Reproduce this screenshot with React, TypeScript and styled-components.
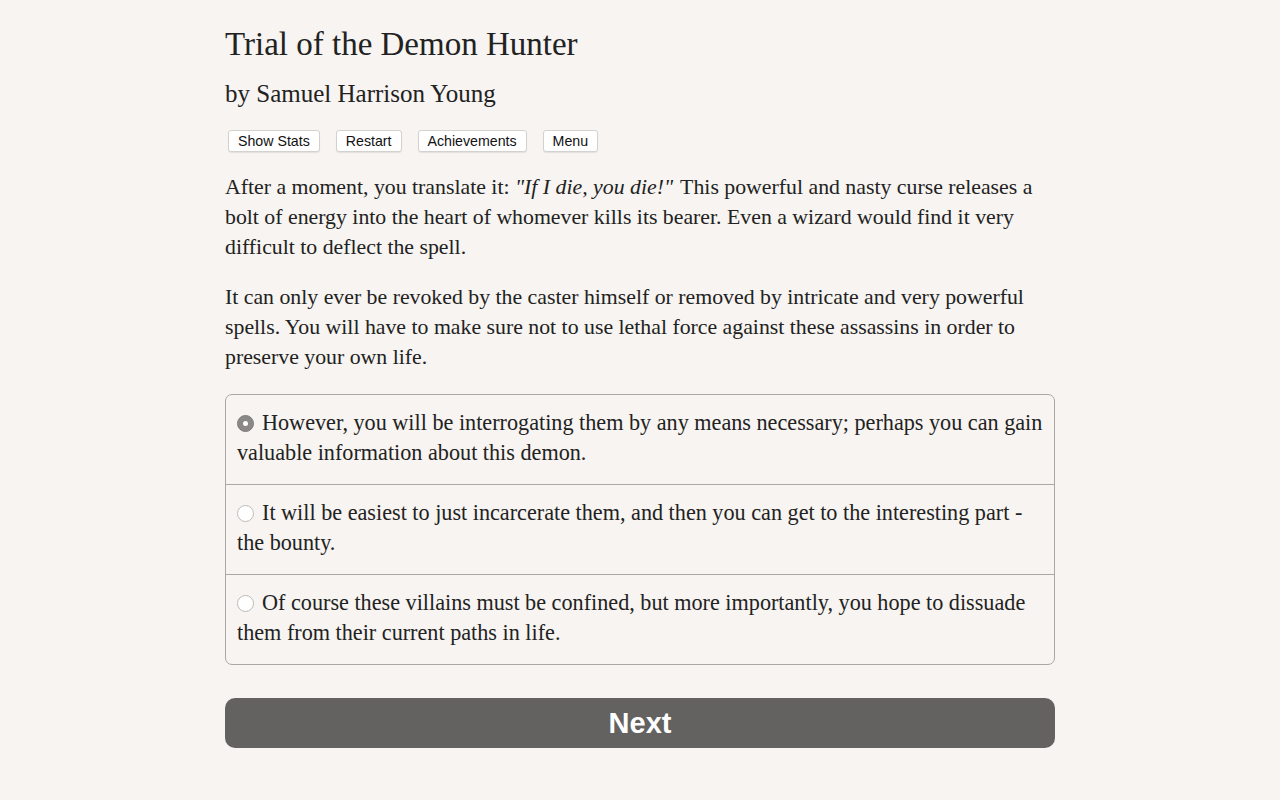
import React, { useState } from 'react';
import styled, { createGlobalStyle } from 'styled-components';

const GlobalStyle = createGlobalStyle`
    html, body {
        margin: 0;
        padding: 0;
        background: #f7f4f1;
    }
    body {
        font-family: "Liberation Serif", "Times New Roman", serif;
        color: #222;
    }
`

type OptionType = {
    id: number
    text: string
}

const options: OptionType[] = [
    { id: 0, text: 'However, you will be interrogating them by any means necessary; perhaps you can gain valuable information about this demon.' },
    { id: 1, text: 'It will be easiest to just incarcerate them, and then you can get to the interesting part - the bounty.' },
    { id: 2, text: 'Of course these villains must be confined, but more importantly, you hope to dissuade them from their current paths in life.' },
]

export default function App() {
    const [selected, setSelected] = useState(0);

    return (
        <>
            <GlobalStyle />
            <Page>
                <Title>Trial of the Demon Hunter</Title>
                <Author>by Samuel Harrison Young</Author>
                <Toolbar>
                    <ToolButton>Show Stats</ToolButton>
                    <ToolButton>Restart</ToolButton>
                    <ToolButton>Achievements</ToolButton>
                    <ToolButton>Menu</ToolButton>
                </Toolbar>
                <Paragraph>
                    After a moment, you translate it: <Quote>"If I die, you die!"</Quote> This powerful and nasty curse releases a bolt of energy into the heart of whomever kills its bearer. Even a wizard would find it very difficult to deflect the spell.
                </Paragraph>
                <Paragraph>
                    It can only ever be revoked by the caster himself or removed by intricate and very powerful spells. You will have to make sure not to use lethal force against these assassins in order to preserve your own life.
                </Paragraph>
                <Choices>
                    {options.map(o => (
                        <Choice key={o.id} onClick={() => setSelected(o.id)}>
                            <Radio checked={selected === o.id} />
                            {o.text}
                        </Choice>
                    ))}
                </Choices>
                <NextButton>Next</NextButton>
            </Page>
        </>
    );
}

const Page = styled.div`
    width: 830px;
    margin: 0 auto;
    padding: 24px 0 40px;
    box-sizing: border-box;
    font-size: 21.8px;
    line-height: 30px;
`

const Title = styled.h1`
    margin: 0;
    font-size: 33px;
    font-weight: normal;
    line-height: 40px;
`

const Author = styled.h2`
    margin: 15px 0 0;
    font-size: 25px;
    font-weight: normal;
    line-height: 30px;
`

const Toolbar = styled.div`
    display: flex;
    gap: 16px;
    margin: 21px 0 0 3px;
`

const ToolButton = styled.button`
    font-family: "Liberation Sans", Arial, sans-serif;
    font-size: 14.2px;
    line-height: 16px;
    color: #111;
    background: #fff;
    border: 1px solid #d4d2cf;
    border-radius: 3px;
    padding: 2px 9px;
    box-shadow: 0 1px 1px rgba(0, 0, 0, 0.08);
`

const Paragraph = styled.p`
    margin: 20px 0 0;
`

const Quote = styled.em`
    padding-right: 2px;
`

const Choices = styled.div`
    margin-top: 22px;
    border: 1px solid #aaa8a5;
    border-radius: 7px;
    overflow: hidden;
`

const Choice = styled.div`
    height: 89px;
    box-sizing: border-box;
    padding: 13px 11px 0;
    font-size: 22.2px;
    cursor: pointer;
    & + & {
        border-top: 1px solid #aaa8a5;
        height: 90px;
    }
`

const Radio = styled.span<{ checked: boolean }>`
    display: inline-block;
    width: 17px;
    height: 17px;
    margin: 0 8px 0 0;
    border-radius: 50%;
    box-sizing: border-box;
    vertical-align: -2px;
    background: ${props => props.checked ? '#8a8987' : '#fff'};
    border: 1px solid ${props => props.checked ? '#7d7c7a' : '#bdbbb8'};
    position: relative;
    &::after {
        content: '';
        display: ${props => props.checked ? 'block' : 'none'};
        position: absolute;
        left: 5px;
        top: 5px;
        width: 5px;
        height: 5px;
        border-radius: 50%;
        background: #fff;
    }
`

const NextButton = styled.button`
    display: block;
    width: 100%;
    height: 50px;
    margin-top: 33px;
    border: none;
    border-radius: 10px;
    background: #636260;
    color: #fff;
    font-family: "Liberation Sans", Arial, sans-serif;
    font-weight: bold;
    font-size: 29px;
`
